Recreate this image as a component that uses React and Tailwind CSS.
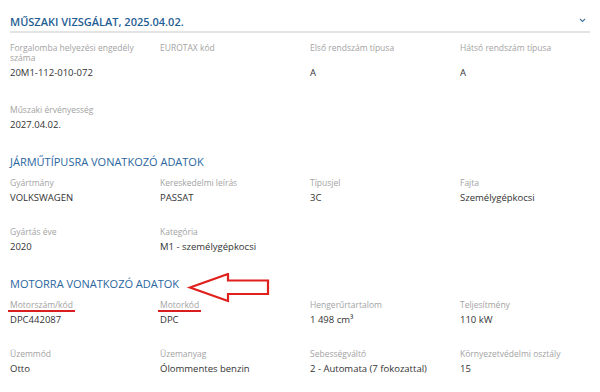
import React from 'react';

const sections = [
  {
    title: 'MŰSZAKI VIZSGÁLAT, 2025.04.02.',
    gap: 'gap-[26px]',
    rows: [
      [
        ['Forgalomba helyezési engedély száma', '20M1-112-010-072'],
        ['EUROTAX kód', ''],
        ['Első rendszám típusa', 'A'],
        ['Hátsó rendszám típusa', 'A'],
      ],
      [['Műszaki érvényesség', '2027.04.02.']],
    ],
  },
  {
    title: 'JÁRMŰTÍPUSRA VONATKOZÓ ADATOK',
    gap: 'gap-[23px]',
    rows: [
      [
        ['Gyártmány', 'VOLKSWAGEN'],
        ['Kereskedelmi leírás', 'PASSAT'],
        ['Típusjel', '3C'],
        ['Fajta', 'Személygépkocsi'],
      ],
      [
        ['Gyártás éve', '2020'],
        ['Kategória', 'M1 - személygépkocsi'],
      ],
    ],
  },
  {
    title: 'MOTORRA VONATKOZÓ ADATOK',
    gap: 'gap-[23px]',
    rows: [
      [
        ['Motorszám/kód', 'DPC442087', true],
        ['Motorkód', 'DPC', true],
        ['Hengerűrtartalom', '1 498 cm³'],
        ['Teljesítmény', '110 kW'],
      ],
      [
        ['Üzemmód', 'Otto'],
        ['Üzemanyag', 'Ólommentes benzin'],
        ['Sebességváltó', '2 - Automata (7 fokozattal)'],
        ['Környezetvédelmi osztály', '15'],
      ],
    ],
  },
];

// labels in the first grid row, values in the second, so values line up
function Row({ fields }) {
  return (
    <div className="grid grid-cols-[150px_150px_150px_150px] gap-y-[4px]">
      {fields.map(([label, , marked], k) => (
        <div key={'l' + k} className="pr-[20px] text-[8.5px] leading-[10px] text-[#a3a3a3]" style={{ gridColumn: k + 1, gridRow: 1 }}>
          <span className={marked ? 'border-b-2 border-[#d81e1e] -mx-[2px] px-[2px]' : ''}>{label}</span>
        </div>
      ))}
      {fields.map(([, value], k) => (
        <div key={'v' + k} className="text-[9.5px] leading-[12px] text-[#333]" style={{ gridColumn: k + 1, gridRow: 2 }}>
          {value || '\u00a0'}
        </div>
      ))}
    </div>
  );
}

export default function App() {
  return (
    <div className="w-[600px] h-[392px] bg-white overflow-hidden px-[10px] pt-[14px] font-['Open_Sans',sans-serif]">
      {sections.map((s, i) => (
        <div key={i} className={i === 0 ? '' : 'mt-[23px]'}>
          {i === 0 ? (
            <div className="flex items-center justify-between border-b-2 border-[#e4e4e4] pb-[1px]">
              <h2 className="text-[11px] leading-[16px] font-semibold text-[#1f5e94]">{s.title}</h2>
              <svg width="7" height="5" viewBox="0 0 7 5" className="mr-[4px] -mt-[4px]">
                <path d="M1 1 L3.5 3.5 L6 1" fill="none" stroke="#4a78a4" strokeWidth="1.2" />
              </svg>
            </div>
          ) : (
            <div className="relative">
              <h2 className="text-[11px] leading-[16px] text-[#2a66a0]">{s.title}</h2>
              {i === 2 && (
                <svg className="absolute left-[176px] top-[-3px]" width="96" height="34" viewBox="0 0 96 34">
                  <path
                    d="M4 14.5 L42 1 L42 7.5 L82 7.5 L82 21 L42 21 L42 28 Z"
                    fill="none"
                    stroke="#e0201c"
                    strokeWidth="2.2"
                    strokeLinejoin="miter"
                  />
                </svg>
              )}
            </div>
          )}
          <div className={`${i === 0 ? 'mt-[10px]' : 'mt-[8px]'} flex flex-col ${s.gap}`}>
            {s.rows.map((row, r) => (
              <Row key={r} fields={row} />
            ))}
          </div>
        </div>
      ))}
    </div>
  );
}
